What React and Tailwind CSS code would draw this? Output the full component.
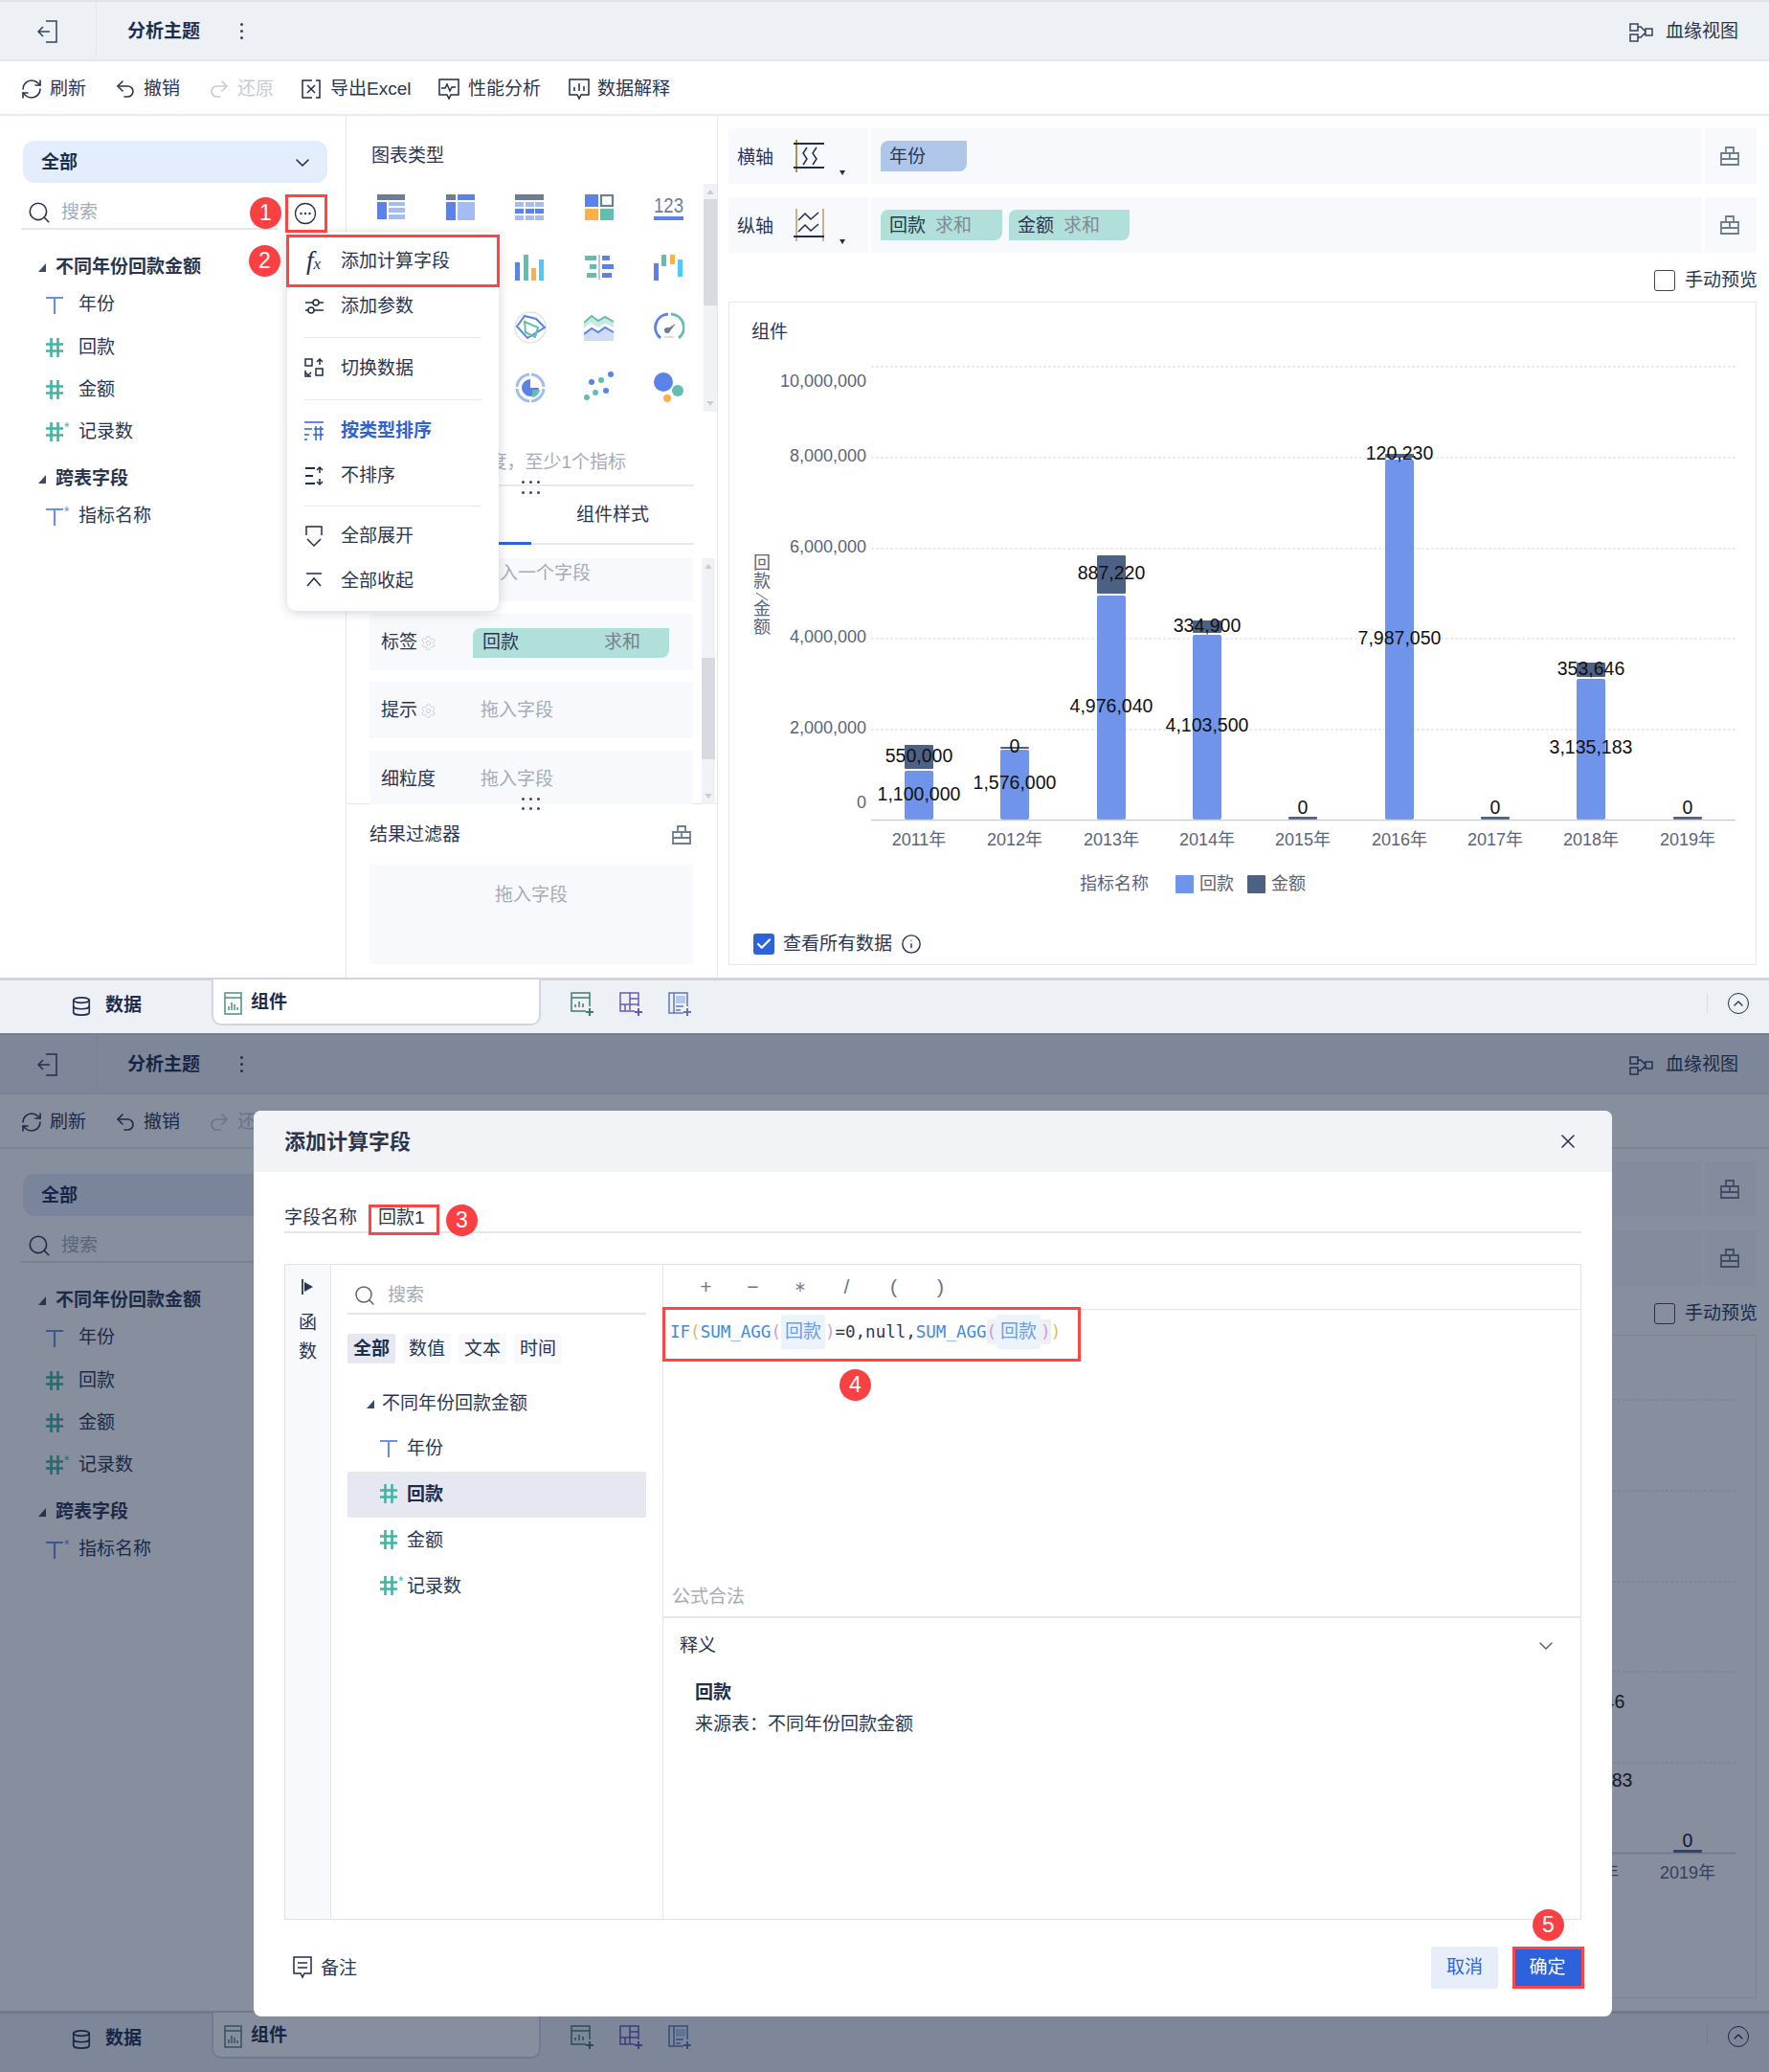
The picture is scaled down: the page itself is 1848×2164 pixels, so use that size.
import React from "react";
import { Asterisk, ChevronDown, Database, Info, RefreshCw, Redo2, Search, Settings, Undo2, X, Check, ChevronUp } from "lucide-react";

const Svg = ({ w = 22, h = 22, vb, children, sw = 1.5, color = "currentColor", className = "" }) => (
  <svg width={w} height={h} viewBox={vb || `0 0 ${w} ${h}`} fill="none" stroke={color} strokeWidth={sw} className={`shrink-0 ${className}`}>
    {children}
  </svg>
);

const TIcon = ({ star }) => (
  <svg width="24" height="22" viewBox="0 0 24 22" className="shrink-0 overflow-visible">
    <path d="M0 3h18M9 3v17" stroke="#6a8fdc" strokeWidth="2.2" fill="none" />
    {star && <text x="19" y="10" fontSize="14" fill="#6a8fdc">*</text>}
  </svg>
);
const HashIcon = ({ star }) => (
  <svg width="24" height="22" viewBox="0 0 24 22" className="shrink-0 overflow-visible">
    <path d="M0 6.5h18M0 13.5h18M5.5 0v20M12.5 0v20" stroke="#3fb5a5" strokeWidth="2.6" fill="none" />
    {star && <text x="19" y="10" fontSize="14" fill="#3fb5a5">*</text>}
  </svg>
);
const Tri = () => (
  <svg width="8" height="9" viewBox="0 0 8 9" className="shrink-0"><path d="M8 0v9H0z" fill="#3d4a63" /></svg>
);
const Lock = ({ className = "" }) => (
  <Svg w={20} h={20} color="#6f7b8f" sw={1.8} className={className}>
    <path d="M1 7h18v12H1zM6 7V1h8v6M1 13h18M10 7v6" />
  </Svg>
);

const B = "#5b82e8", L = "#a3bdf2", G = "#6e7d94", T = "#62bfb0", O = "#fbb04a", C = "#4fc9f6";
const R = ({ x, y, w, h, f }) => <rect x={x} y={y} width={w} height={h} fill={f} stroke="none" />;
const Rects = ({ items }) => (
  <svg width="31" height="28" viewBox="0 0 31 28">
    {items.map((r, i) => <R key={i} x={r[0]} y={r[1]} w={r[2]} h={r[3]} f={r[4]} />)}
  </svg>
);
const chartIcons = [
  <Rects items={[[0,0,29,6,G],[0,8,10,18,B],[12,8,17,4,L],[12,14,17,5,L],[12,21,17,5,L]]} />,
  <Rects items={[[0,0,10,6,G],[12,0,18,6,B],[0,8,10,19,B],[12,8,18,19,L]]} />,
  <Rects items={[[0,0,30,6,G],[0,8,9,5,L],[11,8,9,5,L],[21,8,9,5,L],[0,15,9,5,B],[11,15,9,5,B],[21,15,9,5,B],[0,22,9,5,L],[11,22,9,5,L],[21,22,9,5,L]]} />,
  <svg width="31" height="28" viewBox="0 0 31 28"><R x={0} y={0} w={14} h={13} f={B} /><rect x="17" y="1" width="12" height="11" fill="none" stroke={G} strokeWidth="2.2" /><R x={0} y={15} w={14} h={12} f={O} /><R x={16} y={15} w={14} h={12} f={T} /></svg>,
  <svg width="32" height="30" viewBox="0 0 32 30" className="overflow-visible"><text x="0" y="20" fontSize="22" fill={G} textLength="31" lengthAdjust="spacingAndGlyphs">123</text><R x={0} y={24} w={31} h={4} f={B} /></svg>,
  <div />,
  <div />,
  <Rects items={[[0,8,5,19,B],[9,0,5,27,T],[17,14,5,13,O],[25,5,5,22,C]]} />,
  <Rects items={[[14,0,2,26,"#c0c6d2"],[0,1,12,5,T],[18,1,8,5,B],[5,10,7,5,T],[18,10,12,5,B],[2,19,10,5,T],[18,19,10,5,B]]} />,
  <Rects items={[[0,9,5,18,B],[8,0,5,12,T],[17,0,5,10,O],[25,5,5,18,C]]} />,
  <div />,
  <div />,
  <svg width="34" height="34" viewBox="0 0 34 34" fill="none"><circle cx="17" cy="17" r="16" stroke="#dfe3ec" strokeWidth="1.5" /><path d="M3 16 11 5l12 3 9 9-18 11z" stroke={B} strokeWidth="2" /><path d="M11 11l14 6-3 10-10-5z" stroke={T} strokeWidth="2" /></svg>,
  <svg width="32" height="30" viewBox="0 0 32 30"><path d="M0 10 8 3l7 5 7-4 9 5v6l-9-4-7 4-8-5-7 6z" fill="#cbe8e3" /><path d="M0 10 8 3l7 5 7-4 9 5" stroke={T} strokeWidth="2" fill="none" /><path d="M0 22l8-6 7 4 7-5 9 5v9H0z" fill="#d1ddf8" /><path d="M0 22l8-6 7 4 7-5 9 5" stroke={B} strokeWidth="2" fill="none" /></svg>,
  <svg width="32" height="32" viewBox="0 0 32 32" fill="none"><path d="M7 27A14 14 0 0 1 15 2" stroke={B} strokeWidth="3" /><path d="M18 2a14 14 0 0 1 8 25" stroke={T} strokeWidth="3" /><path d="M13 18l10-6-7 9z" fill={G} /><circle cx="14" cy="19" r="3" fill={G} /><path d="M11 26h10" stroke="#d9dde6" strokeWidth="2" /></svg>,
  <div />,
  <div />,
  <svg width="32" height="34" viewBox="0 0 32 34" fill="none"><circle cx="16" cy="17" r="14" stroke={L} strokeWidth="3" /><path d="M16 1v4M16 29v4M0 17h4M28 17h4" stroke="#fff" strokeWidth="2" /><path d="M16 8a9 9 0 1 0 9 9h-9z" fill={B} /><path d="M18 19h8a9 9 0 0 1-8 8z" fill={T} /></svg>,
  <svg width="32" height="34" viewBox="0 0 32 34"><circle cx="28" cy="3" r="3" fill={B} /><circle cx="18" cy="9" r="3" fill={T} /><circle cx="8" cy="11" r="3" fill={B} /><circle cx="23" cy="20" r="3" fill={B} /><circle cx="12" cy="22" r="3" fill={T} /><circle cx="3" cy="27" r="3" fill={T} /></svg>,
  <svg width="32" height="32" viewBox="0 0 32 32"><circle cx="10" cy="10" r="10" fill={B} /><circle cx="25" cy="19" r="6" fill={T} /><circle cx="14" cy="27" r="4" fill={O} /></svg>,
];

const Toolbar = () => {
  const items = [
    [<RefreshCw size={24} strokeWidth={1.6} />, "刷新", "w-[98px] gap-[7px]", ""],
    [<Undo2 size={24} strokeWidth={1.6} />, "撤销", "w-[98px] gap-[7px]", ""],
    [<Redo2 size={24} strokeWidth={1.6} />, "还原", "w-[97px] gap-[7px]", "text-[#c5cbd5]"],
    [<Svg w={22} h={22} color="#1f2d4d"><path d="M6 2H2v18h4M16 2h4v18h-4M7 7l8 8M15 7l-8 8" /><path d="M6 2h6M6 20h6" /></Svg>, "导出Excel", "w-[144px] gap-[9px]", ""],
    [<Svg w={22} h={24} color="#1f2d4d"><path d="M1 2h20v16H13l-2 4-2-4H1z" /><path d="M3 11h4l2-4 3 7 2-4h4" /></Svg>, "性能分析", "w-[136px] gap-[9px]", ""],
    [<Svg w={22} h={24} color="#1f2d4d"><path d="M1 2h20v16H13l-2 4-2-4H1z" /><path d="M6 10v4M11 6v8M16 9v5" /></Svg>, "数据解释", "w-[110px] gap-[8px]", ""],
  ];
  return (
    <div className="flex items-center h-[57px] pl-[21px] pt-[3px] border-b-2 border-[#e9ebf0] bg-white text-[19px] text-[#2a3650]">
      {items.map(([icon, t, w, c], i) => (
        <div key={i} className={`flex items-center ${w} ${c}`}>{icon}<span>{t}</span></div>
      ))}
    </div>
  );
};

const Header = () => (
  <div className="flex items-center h-[64px] bg-[#edf0f5] border-b-2 border-[#e3e6ec] border-t-2 border-t-[#dfe2e8]">
    <div className="flex items-center justify-center w-[101px] h-full border-r border-[#e3e6ec] pt-[2px] text-[#2c3a55]">
      <Svg w={22} h={26} color="#33415c"><path d="M9 2h11v22H9M1 13h12M6 8l-5 5 5 5" /></Svg>
    </div>
    <div className="ml-[32px] pt-[3px] text-[19px] font-bold text-[#1f2d4d]">分析主题</div>
    <div className="ml-[42px] flex flex-col gap-[4px]">
      <span className="w-[3px] h-[3px] rounded-full bg-[#33415c]" />
      <span className="w-[3px] h-[3px] rounded-full bg-[#33415c]" />
      <span className="w-[3px] h-[3px] rounded-full bg-[#33415c]" />
    </div>
    <div className="ml-auto mr-[32px] pt-[3px] flex items-center gap-[13px] text-[19px] text-[#2a3650]">
      <Svg w={25} h={22} color="#33415c"><path d="M1 2h8v7H1zM1 13h8v7H1zM17 7h7v7h-7zM9 5h3l5 5M9 16h3l5-5" /></Svg>
      <span>血缘视图</span>
    </div>
  </div>
);

const Row = ({ icon, text, extra = "", bold }) => (
  <div className={`flex items-center h-[40px] pl-[48px] pt-[3px] gap-[10px] text-[19px] text-[#2a3650] ${extra} ${bold ? "font-bold" : ""}`}>
    {icon}<span>{text}</span>
  </div>
);
const Group = ({ text, extra = "" }) => (
  <div className={`flex items-center h-[40px] pl-[40px] pt-[4px] gap-[10px] text-[19px] font-bold text-[#2a3650] ${extra}`}>
    <Tri /><span>{text}</span>
  </div>
);

const LeftPanel = () => (
  <div className="w-[362px] shrink-0 flex flex-col border-r border-[#e3e6ec]">
    <div className="mt-[26px] ml-[24px] w-[318px] h-[44px] rounded-[12px] bg-[#e4edfb] flex items-center justify-between pl-[19px] pr-[14px] pt-[2px] text-[19px] font-bold text-[#1f2d4d]">
      <span>全部</span>
      <ChevronDown size={24} strokeWidth={1.6} />
    </div>
    <div className="ml-[22px] w-[268px] h-[49px] border-b-2 border-[#e3e6ec] flex items-center pt-[15px] gap-[10px] pl-[6px] text-[19px] text-[#a5acb8]">
      <Search size={26} strokeWidth={1.5} color="#2a3650" />
      <span>搜索</span>
    </div>
    <Group text="不同年份回款金额" extra="mt-[17px]" />
    <Row icon={<TIcon />} text="年份" />
    <Row icon={<HashIcon />} text="回款" extra="mt-[5px]" />
    <Row icon={<HashIcon />} text="金额" extra="mt-[4px]" />
    <Row icon={<HashIcon star />} text="记录数" extra="mt-[4px]" />
    <Group text="跨表字段" extra="mt-[8px]" />
    <Row icon={<TIcon star />} text="指标名称" />
  </div>
);

const Scroll = ({ h, thumbTop, thumbH }) => (
  <div className={`relative w-[14px] shrink-0 bg-[#f1f2f5] ${h}`}>
    <div className={`absolute left-0 w-full bg-[#d7dade] ${thumbTop} ${thumbH}`} />
    <div className="absolute top-[6px] left-[3px] w-0 h-0 border-x-[4px] border-x-transparent border-b-[5px] border-b-[#c9cdd4]" />
    <div className="absolute bottom-[6px] left-[3px] w-0 h-0 border-x-[4px] border-x-transparent border-t-[5px] border-t-[#c9cdd4]" />
  </div>
);

const Dots = ({ className }) => (
  <div className={`absolute flex gap-[5px] ${className}`}>
    <span className="w-[3px] h-[3px] rounded-full bg-[#3a4660]" />
    <span className="w-[3px] h-[3px] rounded-full bg-[#3a4660]" />
    <span className="w-[3px] h-[3px] rounded-full bg-[#3a4660]" />
  </div>
);

const Field = ({ h, children, extra = "" }) => (
  <div className={`w-[338px] bg-[#f7f9fc] flex items-center pl-[12px] pt-[2px] text-[19px] text-[#2a3650] overflow-hidden ${h} ${extra}`}>{children}</div>
);
const Gear = () => <Settings size={17} strokeWidth={1.4} color="#c6cbd4" className="ml-[3px]" />;

const MiddlePanel = () => (
  <div className="w-[388px] shrink-0 flex flex-col border-r border-[#e3e6ec]">
    <div className="h-[65px] pl-[26px] pt-[29px] text-[19px] leading-[26px] text-[#2a3650]">图表类型</div>
    <div className="flex h-[248px] pl-[11px]">
      <div className="grid grid-cols-5 auto-rows-[62.5px] w-[362px] place-items-center">
        {chartIcons.map((c, i) => <div key={i}>{c}</div>)}
      </div>
      <div className="mt-[6px]"><Scroll h="h-[238px]" thumbTop="top-[16px]" thumbH="h-[111px]" /></div>
    </div>
    <div className="h-[72px] flex items-start justify-end pr-[95px] pt-[36px] text-[19px] leading-[26px] text-[#a5acb8]">至少1个维度，至少1个指标</div>
    <div className="relative mx-[24px] h-[63px] flex border-y-2 border-y-[#e6e9f0] w-[339px] pt-[2px] text-[19px] text-[#2a3650]">
      <Dots className="-top-[6px] left-[159px]" />
      <Dots className="top-[5px] left-[159px]" />
      <div className="w-[169px] flex items-center justify-center border-b-[3px] border-[#2c62dc] -mb-[2px]">图表属性</div>
      <div className="w-[170px] flex items-center justify-center">组件样式</div>
    </div>
    <div className="relative h-[271px] flex pl-[24px] pt-[14px] border-b border-[#e3e6ec] overflow-visible">
      <Dots className="bottom-[3px] left-[183px]" />
      <Dots className="-bottom-[7px] left-[183px] z-10" />
      <div className="flex flex-col w-[338px] h-[257px] overflow-hidden">
        <Field h="h-[45px] shrink-0"><span className="ml-[105px] -mt-[14px] text-[#a5acb8]">拖入一个字段</span></Field>
        <Field h="h-[59px] shrink-0" extra="mt-[13px]">
          <span>标签</span><Gear />
          <div className="ml-[38px] w-[205px] h-[31px] bg-[#b0e0d9] rounded-tl-[8px] rounded-br-[8px] flex items-center justify-between pl-[10px] pr-[30px]">
            <span>回款</span><span className="text-[#75828e]">求和</span>
          </div>
        </Field>
        <Field h="h-[59px] shrink-0" extra="mt-[12px]">
          <span>提示</span><Gear />
          <span className="ml-[46px] text-[#a5acb8]">拖入字段</span>
        </Field>
        <Field h="h-[59px] shrink-0" extra="mt-[13px]">
          <span>细粒度</span>
          <span className="ml-[47px] text-[#a5acb8]">拖入字段</span>
        </Field>
      </div>
      <div className="ml-[9px]"><Scroll h="h-[257px]" thumbTop="top-[104px]" thumbH="h-[106px]" /></div>
    </div>
    <div className="mx-[24px] pr-[3px] h-[63px] flex items-center justify-between pt-[1px] text-[19px] text-[#2a3650]">
      <span>结果过滤器</span>
      <Lock />
    </div>
    <div className="ml-[24px] w-[338px] h-[104px] bg-[#f7f9fc] pt-[19px] text-center text-[19px] leading-[26px] text-[#a5acb8]">拖入字段</div>
  </div>
);

const AxisRow = ({ label, icon, children, extra = "" }) => (
  <div className={`flex h-[58px] w-[1074px] bg-[#f7f9fc] text-[19px] text-[#2a3650] ${extra}`}>
    <div className="relative w-[149px] shrink-0 flex items-center pl-[9px] border-r-[3px] border-white">
      <span className="pt-[4px]">{label}</span>
      <span className="ml-[21px]">{icon}</span>
      <span className="absolute left-[116px] bottom-[9px] w-0 h-0 border-x-[3px] border-x-transparent border-t-[5px] border-t-[#1f2d4d]" />
    </div>
    <div className="flex-1 flex items-center gap-[7px] pl-[10px]">{children}</div>
    <div className="w-[57px] shrink-0 flex items-center justify-center pr-[2px] border-l-[3px] border-white"><Lock /></div>
  </div>
);

const Pill = ({ a, b, w, color }) => (
  <div className={`h-[32px] rounded-tl-[8px] rounded-br-[8px] flex items-center pl-[9px] pt-[2px] gap-[10px] ${w} ${color}`}>
    <span>{a}</span>{b && <span className="text-[#7f8a96]">{b}</span>}
  </div>
);

const bars = [
  { x: 960, yr: "2011年", blue: 805, d: [778, 803] },
  { x: 1060, yr: "2012年", blue: 783, d: [780, 782] },
  { x: 1161, yr: "2013年", blue: 622, d: [580, 620] },
  { x: 1261, yr: "2014年", blue: 663, d: [648, 661] },
  { x: 1361, yr: "2015年", d: [853, 856] },
  { x: 1462, yr: "2016年", blue: 480, d: [474, 478] },
  { x: 1562, yr: "2017年", d: [853, 856] },
  { x: 1662, yr: "2018年", blue: 709, d: [692, 707] },
  { x: 1763, yr: "2019年", d: [853, 856] },
];
const ticks = [
  [383, 398, "10,000,000"], [478, 476, "8,000,000"], [573, 571, "6,000,000"],
  [667, 665, "4,000,000"], [762, 760, "2,000,000"],
];
const dataLabels = [
  [960, 789, "550,000"], [960, 829, "1,100,000"], [1060, 779, "0"], [1060, 817, "1,576,000"],
  [1161, 598, "887,220"], [1161, 737, "4,976,040"], [1261, 653, "334,900"], [1261, 757, "4,103,500"],
  [1361, 843, "0"], [1462, 473, "120,230"], [1462, 666, "7,987,050"], [1562, 843, "0"],
  [1662, 698, "353,646"], [1662, 780, "3,135,183"], [1763, 843, "0"],
];

const Chart = () => (
  <svg width="1072" height="580" viewBox="762 365 1072 580" className="block" fontSize="18">
    {ticks.map(([y]) => <line key={y} x1="910" x2="1813" y1={y} y2={y} stroke="#e4e6eb" strokeWidth="1.5" strokeDasharray="3 2" />)}
    {ticks.map(([, ty, t]) => <text key={t} x="905" y={ty} textAnchor="end" dominantBaseline="central" fill="#5a6478">{t}</text>)}
    <text x="905" y="838" textAnchor="end" dominantBaseline="central" fill="#5a6478">0</text>
    {[["回", 588], ["款", 607], ["金", 636], ["额", 655]].map(([c, y]) => (
      <text key={c} x="796" y={y} textAnchor="middle" dominantBaseline="central" fill="#5a6478">{c}</text>
    ))}
    <line x1="790" y1="619" x2="802" y2="627" stroke="#5a6478" strokeWidth="1" />
    {bars.map((b) => (
      <g key={b.x}>
        {b.blue && <rect x={b.x - 15} y={b.blue} width="30" height={856 - b.blue} rx="2" fill="#7094ea" />}
        <rect x={b.x - 15} y={b.d[0]} width="30" height={b.d[1] - b.d[0]} rx="1" fill="#4d6185" />
        <text x={b.x} y="877" textAnchor="middle" dominantBaseline="central" fill="#5a6478">{b.yr}</text>
      </g>
    ))}
    <line x1="910" x2="1813" y1="856.5" y2="856.5" stroke="#cdd0d6" strokeWidth="1.5" />
    {dataLabels.map(([x, y, t], i) => <text key={i} x={x} y={y} fontSize="19.5" textAnchor="middle" dominantBaseline="central" fill="#111">{t}</text>)}
    <text x="1128" y="923" dominantBaseline="central" fill="#5a6478">指标名称</text>
    <rect x="1228" y="914" width="19" height="19" rx="1" fill="#7094ea" />
    <text x="1253" y="923" dominantBaseline="central" fill="#5a6478">回款</text>
    <rect x="1303" y="914" width="19" height="19" rx="1" fill="#4d6185" />
    <text x="1328" y="923" dominantBaseline="central" fill="#5a6478">金额</text>
  </svg>
);

const RightPanel = () => (
  <div className="flex-1 flex flex-col pl-[11px] pt-[13px] text-[19px] text-[#2a3650]">
    <AxisRow label="横轴" icon={<Svg w={34} h={34} color="#1f2d4d"><path d="M3 0v34" stroke="#9a6a1a" /><path d="M0 4h32M0 29h32" strokeWidth="2" /><path d="M14 8l-4 6 4 6-4 6M24 8l-4 6 4 6-4 6" /></Svg>}>
      <Pill a="年份" w="w-[90px]" color="bg-[#b0c6e8]" />
    </AxisRow>
    <AxisRow label="纵轴" extra="mt-[14px]" icon={<Svg w={34} h={34} color="#1f2d4d"><path d="M3 0v34M31 0v34" stroke="#9a6a1a" strokeWidth="1" /><path d="M0 29h32" strokeWidth="2" /><path d="M5 12l7-7 6 6 8-7M5 24l7-7 6 6 8-7" /></Svg>}>
      <Pill a="回款" b="求和" w="w-[127px]" color="bg-[#b0e0d9]" />
      <Pill a="金额" b="求和" w="w-[126px]" color="bg-[#b0e0d9]" />
    </AxisRow>
    <div className="w-[1075px] h-[20px] mt-[19px] flex items-center justify-end gap-[10px]">
      <span className="w-[22px] h-[22px] rounded-[3px] border-[1.5px] border-[#3a4660] bg-white" />
      <span className="pt-[1px]">手动预览</span>
    </div>
    <div className="w-[1074px] h-[693px] mt-[12px] border border-[#e6e8ed] flex flex-col">
      <div className="h-[49px] pl-[23px] pt-[18px] leading-[26px]">组件</div>
      <Chart />
      <div className="h-[62px] pt-[20px] pl-[25px] flex items-center gap-[9px]">
        <span className="w-[22px] h-[22px] rounded-[3px] bg-[#2c62dc] flex items-center justify-center"><Check size={18} strokeWidth={3} color="#fff" /></span>
        <span className="pt-[1px]">查看所有数据</span>
        <Info size={22} strokeWidth={1.5} color="#1f2d4d" />
      </div>
    </div>
  </div>
);

const BottomBar = () => (
  <div className="flex h-[58px] bg-[#edf0f5] border-t-[3px] border-[#d1d5db] text-[19px] font-bold text-[#1f2d4d]">
    <div className="w-[221px] flex items-center pl-[74px] pb-[2px] gap-[14px]"><Database size={22} strokeWidth={1.8} /><span>数据</span></div>
    <div className="w-[344px] h-[48px] -mt-[1px] bg-white border-2 border-t-0 border-[#d3d6e2] rounded-b-[10px] flex items-center pl-[11px] pt-[3px] gap-[9px]">
      <Svg w={19} h={24} color="#4e8a83" ><path d="M1 1h17v22H1zM1 6h17" /><path d="M5 19v-4M8 19v-8M11 19v-6M14 19v-3" /></Svg>
      <span>组件</span>
    </div>
    <div className="flex items-center pl-[31px] pb-[6px] gap-[27px]">
      <Svg w={24} h={26} color="#3f7a72"><path d="M16 20H1V1h19v14M1 6h19M5 16v-3M9 16v-6M13 16v-4" /><path d="M20 17v8M16 21h8" strokeWidth="2" /></Svg>
      <Svg w={24} h={26} color="#6a58b8"><path d="M16 20H1V1h19v14M11 1v18M1 13h19M11 7h9M6 13v7" /><path d="M20 17v8M16 21h8" strokeWidth="2" /></Svg>
      <Svg w={24} h={26} color="#5d78b8"><path d="M16 22H1V1h19v14M6 1v21" /><rect x="8" y="4" width="10" height="8" fill="#b3c8ee" stroke="none" /><path d="M8 15h8M8 19h5" /><path d="M20 17v8M16 21h8" strokeWidth="2" /></Svg>
    </div>
    <div className="ml-auto flex items-center pr-[21px] pb-[7px] font-normal">
      <span className="w-px h-[20px] bg-[#d8dbe2] mr-[21px]" />
      <span className="w-[22px] h-[22px] rounded-full border-[1.5px] border-[#1f2d4d] flex items-center justify-center"><ChevronUp size={16} strokeWidth={1.8} /></span>
    </div>
  </div>
);

const Badge = ({ n, className }) => (
  <div className={`absolute w-[33px] h-[33px] rounded-full bg-[#f94144] text-white text-[23px] flex items-center justify-center z-30 ${className}`}>{n}</div>
);
const RedBox = ({ className }) => (
  <div className={`absolute border-[3px] border-[#ff4444] z-30 pointer-events-none ${className}`} />
);

const MenuItem = ({ icon, text, active, h = "h-[47px]" }) => (
  <div className={`flex items-center pl-[17px] gap-[18px] text-[19px] ${h} ${active ? "text-[#2c62dc] font-bold" : "text-[#2a3650]"}`}>
    <span className="w-[21px] flex justify-center">{icon}</span><span className="pt-[2px]">{text}</span>
  </div>
);
const Divider = ({ extra }) => <div className={`mx-[18px] h-px bg-[#e6e8ef] ${extra}`} />;

const Menu = () => (
  <div className="absolute left-[300px] top-[242px] w-[221px] h-[396px] bg-white rounded-[10px] shadow-[0_2px_12px_rgba(30,40,80,0.2)] pt-[7px] z-20">
    <MenuItem text="添加计算字段" icon={<span className="font-['Liberation_Serif',serif] italic text-[27px] leading-none text-[#1f2d4d]">f<span className="text-[17px]">x</span></span>} />
    <MenuItem text="添加参数" icon={<Svg w={20} h={20} color="#1f2d4d"><path d="M1 6h19M1 14h19" /><circle cx="12" cy="6" r="3" fill="#fff" /><circle cx="7" cy="14" r="3" fill="#fff" /></Svg>} />
    <Divider extra="mt-[9px]" />
    <div className="mt-[8px]"><MenuItem text="切换数据" icon={<Svg w={20} h={24} color="#1f2d4d"><path d="M1 2h7v7H1zM12 12h7v7h-7zM1 14v6h6M13 5l3-3 3 3M1 16l3 3 3-3M16 2v6" /></Svg>} /></div>
    <Divider extra="mt-[9px]" />
    <div className="mt-[8px]"><MenuItem active text="按类型排序" icon={<Svg w={22} h={22} color="#2c62dc"><path d="M1 2h20M1 9h8M1 15h5M1 20h3M11 9h10M10 15h11M13 6v15M18 6v15" /></Svg>} /></div>
    <MenuItem text="不排序" icon={<Svg w={20} h={22} color="#1f2d4d"><path d="M1 3h10M1 11h8M1 19h10" strokeWidth="2" /><path d="M16 8V2M13 5l3-3 3 3M16 14v6M13 17l3 3 3-3" /></Svg>} />
    <Divider extra="mt-[8px]" />
    <div className="mt-[7px]"><MenuItem text="全部展开" icon={<Svg w={20} h={24} color="#1f2d4d"><path d="M2 11V2h16v9M3 15l7 7 7-7" /></Svg>} /></div>
    <MenuItem text="全部收起" icon={<Svg w={20} h={20} color="#1f2d4d"><path d="M2 2h16M3 15l7-8 7 8" /></Svg>} />
  </div>
);

const Ellipsis = () => (
  <svg width="24" height="24" viewBox="0 0 24 24" fill="none">
    <circle cx="12" cy="12" r="10.5" stroke="#2a3650" strokeWidth="1.3" />
    <circle cx="7.5" cy="12" r="1.2" fill="#2a3650" />
    <circle cx="12" cy="12" r="1.2" fill="#2a3650" />
    <circle cx="16.5" cy="12" r="1.2" fill="#2a3650" />
  </svg>
);

const Shell = ({ annotated }) => (
  <div className="relative h-[1079px] flex flex-col overflow-hidden bg-white">
    <Header />
    <Toolbar />
    <div className="flex h-[900px]">
      <LeftPanel />
      <MiddlePanel />
      <RightPanel />
    </div>
    <BottomBar />
    {annotated && (
      <>
        <Menu />
        <Badge n="1" className="left-[261px] top-[206px]" />
        <div className="absolute left-[297px] top-[203px] w-[44px] h-[40px] flex items-center justify-center z-10"><Ellipsis /></div>
        <RedBox className="left-[298px] top-[203px] w-[44px] h-[40px]" />
        <Badge n="2" className="left-[260px] top-[256px]" />
        <RedBox className="left-[299px] top-[245px] w-[223px] h-[55px]" />
      </>
    )}
  </div>
);

const TreeRow = ({ icon, text, selected }) => (
  <div className={`flex items-center h-[48px] pl-[34px] gap-[4px] text-[19px] ${selected ? "bg-[#e5e8f0] rounded-[2px] font-bold text-[#1f2d4d]" : "text-[#2a3650]"}`}>
    {icon}<span>{text}</span>
  </div>
);

const Tab = ({ t, active }) => (
  <div className={`h-[31px] w-[50px] pt-[2px] flex items-center justify-center rounded-[2px] text-[19px] ${active ? "bg-[#e5e8f0] font-bold text-[#1f2d4d]" : "bg-[#f7f9fc] text-[#2a3650]"}`}>{t}</div>
);

const Formula = () => {
  const Y = "text-[#e3b95b]", P = "text-[#c79be8]", F = "text-[#3e8ae0]", D = "text-[#2a3650]";
  const Chip = () => <span className="inline-flex items-center justify-center h-[36px] w-[46px] bg-[#ebf3fd] text-[#6d9ce8] rounded-[2px] font-['Liberation_Sans','Noto_Sans_CJK_SC',sans-serif] text-[19px]">回款</span>;
  return (
    <div className="flex items-center h-[46px] pl-[7px] font-['DejaVu_Sans_Mono',monospace] text-[17.5px]">
      <span className={F}>IF</span><span className={Y}>(</span><span className={F}>SUM_AGG</span><span className={P}>(</span><Chip /><span className={P}>)</span>
      <span className={D}>=0,null,</span>
      <span className={F}>SUM_AGG</span><span className={`${P} bg-[#eef0f4]`}>(</span><Chip /><span className={`${P} bg-[#eef0f4]`}>)</span><span className={Y}>)</span>
    </div>
  );
};

const Dialog = () => (
  <div className="absolute left-[265px] top-[81px] w-[1419px] h-[946px] bg-white rounded-[8px] flex flex-col z-10">
    <div className="h-[64px] shrink-0 bg-[#f1f3f7] rounded-t-[8px] flex items-center justify-between pl-[32px] pr-[34px]">
      <span className="text-[22px] font-bold text-[#2a3650]">添加计算字段</span>
      <X size={24} strokeWidth={1.6} color="#2a3650" />
    </div>
    <div className="mx-[32px] h-[64px] pt-[34px] shrink-0 border-b-2 border-[#e3e6ec] flex items-center text-[19px] text-[#2a3650]">
      <span>字段名称</span><span className="ml-[22px]">回款1</span>
    </div>
    <div className="mt-[32px] mx-[32px] h-[685px] shrink-0 border-[1.5px] border-[#dfe2ea] flex">
      <div className="w-[47px] shrink-0 bg-[#f7f9fc] flex flex-col items-center pt-[14px] text-[19px] text-[#2a3650]">
        <Svg w={18} h={18} color="#2a3650" sw={1.8}><path d="M3 1v16" /><path d="M5 4l9 5-9 5z" fill="#2a3650" stroke="none" /></Svg>
        <span className="mt-[15px]">函</span>
        <span className="mt-[1px]">数</span>
      </div>
      <div className="w-[348px] shrink-0 border-x border-[#e3e6ec] px-[17px]">
        <div className="h-[52px] pt-[14px] border-b-2 border-[#e3e6ec] flex items-center gap-[12px] pl-[6px] text-[19px] text-[#a5acb8]">
          <Search size={24} strokeWidth={1.5} color="#5a6478" /><span>搜索</span>
        </div>
        <div className="mt-[20px] flex gap-[8px]">
          <Tab t="全部" active /><Tab t="数值" /><Tab t="文本" /><Tab t="时间" />
        </div>
        <div className="mt-[18px] flex items-center h-[47px] pl-[20px] pt-[2px] gap-[8px] text-[19px] text-[#2a3650]"><Tri /><span>不同年份回款金额</span></div>
        <TreeRow icon={<TIcon />} text="年份" />
        <TreeRow icon={<HashIcon />} text="回款" selected />
        <TreeRow icon={<HashIcon />} text="金额" />
        <TreeRow icon={<HashIcon star />} text="记录数" />
      </div>
      <div className="flex-1 flex flex-col">
        <div className="h-[47px] shrink-0 border-b border-[#e3e6ec] flex items-center pl-[20px] text-[21px] text-[#6b7588]">
          <span className="w-[49px] text-center">+</span>
          <span className="w-[49px] text-center">−</span>
          <span className="w-[49px] flex justify-center"><Asterisk size={18} strokeWidth={1.6} /></span>
          <span className="w-[49px] text-center">/</span>
          <span className="w-[49px] text-center">(</span>
          <span className="w-[49px] text-center">)</span>
        </div>
        <div className="h-[322px] shrink-0 flex flex-col justify-between border-b-2 border-[#e3e6ec]">
          <Formula />
          <div className="pl-[9px] pb-[7px] text-[19px] leading-[26px] text-[#a5acb8]">公式合法</div>
        </div>
        <div className="flex-1 pl-[17px] pr-[24px] text-[19px] text-[#2a3650]">
          <div className="h-[56px] pt-[2px] flex items-center justify-between"><span>释义</span><ChevronDown size={24} strokeWidth={1.5} color="#5a6478" /></div>
          <div className="pl-[16px] mt-[9px] font-bold leading-[26px] text-[#1f2d4d]">回款</div>
          <div className="pl-[16px] mt-[7px] leading-[26px]">来源表：不同年份回款金额</div>
        </div>
      </div>
    </div>
    <div className="mx-[32px] pt-[28px] flex items-start">
      <div className="h-[44px] ml-[9px] flex items-center gap-[9px] text-[19px] text-[#2a3650]">
        <Svg w={20} h={24} color="#1f2d4d"><path d="M1 1h18v17h-7l-2 4-2-4H1zM5 7h10M5 12h10" /></Svg>
        <span className="pt-[2px]">备注</span>
      </div>
      <div className="ml-auto -mr-[3px] flex gap-[15px] text-[19px]">
        <div className="w-[70px] h-[44px] rounded-[2px] bg-[#e8eef9] text-[#2f64db] flex items-center justify-center">取消</div>
        <div className="w-[75px] h-[44px] pr-[2px] bg-[#2c62dc] text-white flex items-center justify-center">确定</div>
      </div>
    </div>
  </div>
);

export default function App() {
  return (
    <div className="w-[1848px] h-[2164px] overflow-hidden bg-white font-['Liberation_Sans','Noto_Sans_CJK_SC',sans-serif]">
      <Shell annotated />
      <div className="relative h-[1085px] overflow-hidden bg-[#edf0f5]">
        <Shell />
        <div className="absolute inset-0 bg-[rgba(15,30,61,0.5)]" />
        <Dialog />
        <div className="absolute inset-0 z-20 pointer-events-none">
          <RedBox className="left-[385px] top-[179px] w-[74px] h-[32px]" />
          <Badge n="3" className="left-[466px] top-[179px]" />
          <RedBox className="left-[692px] top-[286px] w-[437px] h-[57px]" />
          <Badge n="4" className="left-[877px] top-[351px]" />
          <RedBox className="left-[1580px] top-[954px] w-[75px] h-[44px]" />
          <Badge n="5" className="left-[1601px] top-[915px]" />
        </div>
      </div>
    </div>
  );
}
